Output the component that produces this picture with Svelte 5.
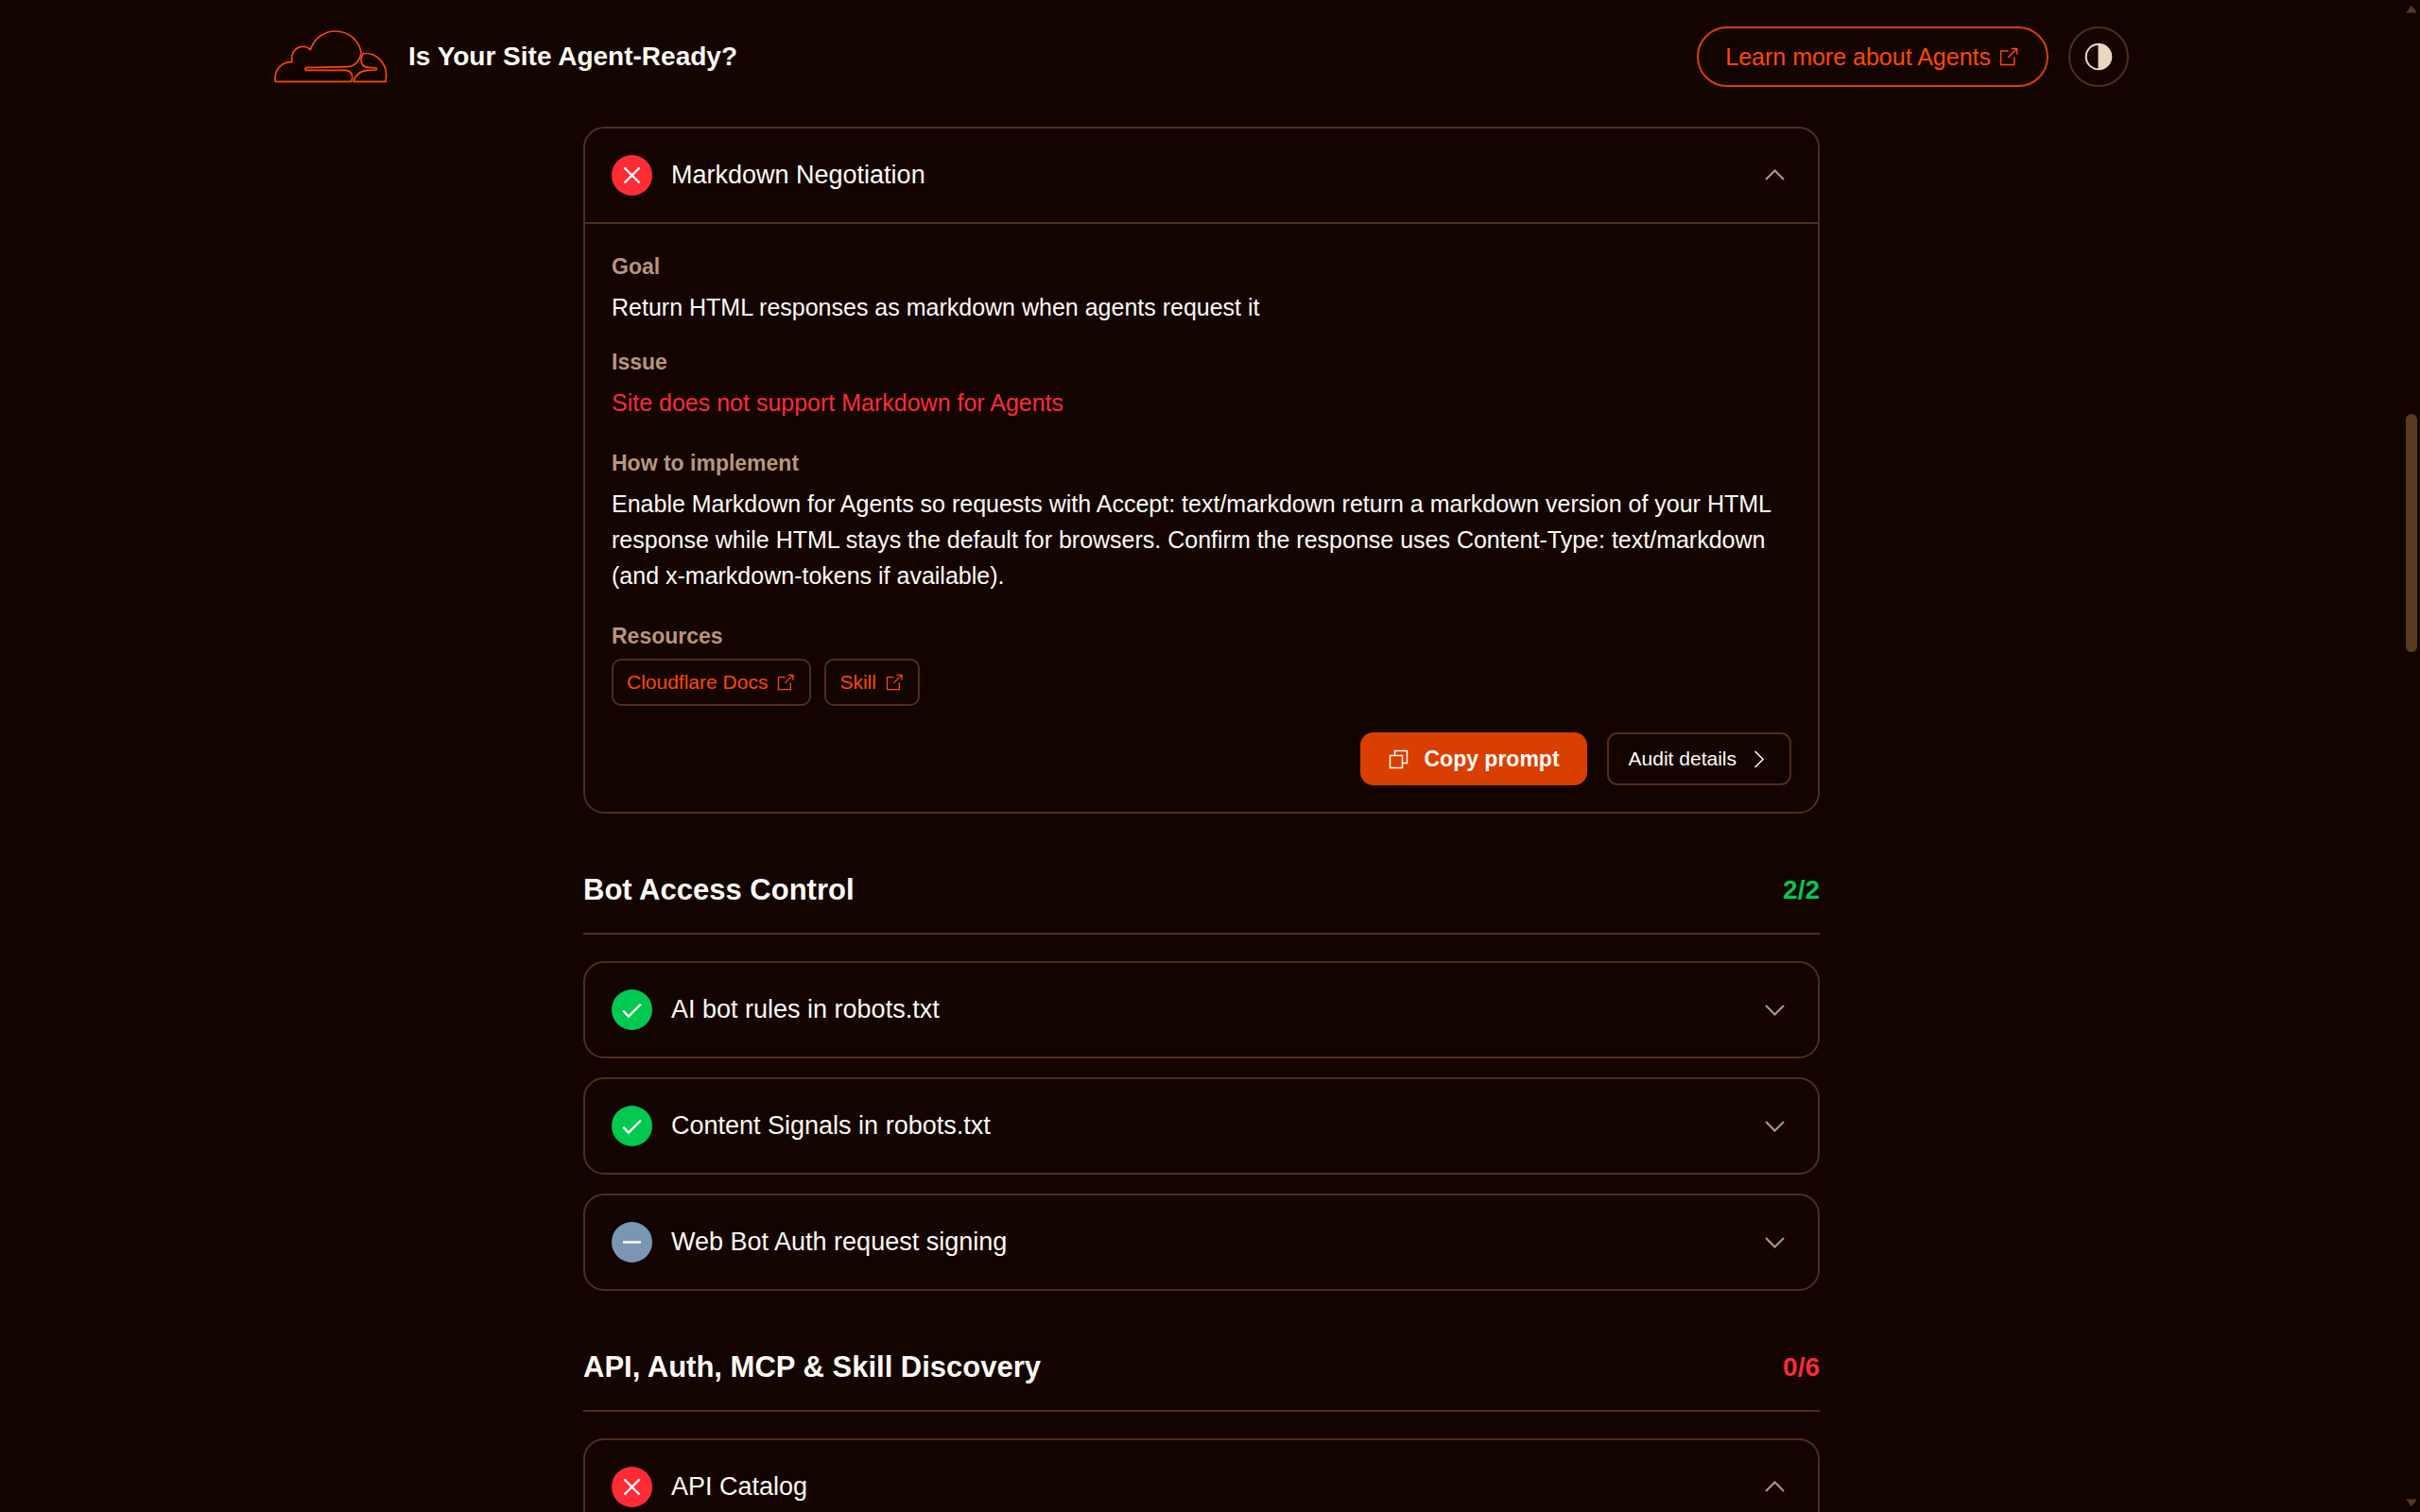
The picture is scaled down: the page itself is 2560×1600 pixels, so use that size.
<script lang="ts">
	type Status = 'pass' | 'fail' | 'neutral';

	interface Check {
		title: string;
		status: Status;
		open?: boolean;
		goal?: string;
		issue?: string;
		fix?: string;
		resources?: string[];
	}

	interface Section {
		title?: string;
		score?: string;
		passed?: boolean;
		checks: Check[];
	}

	let sections: Section[] = $state([
		{
			checks: [
				{
					title: 'Markdown Negotiation',
					status: 'fail',
					open: true,
					goal: 'Return HTML responses as markdown when agents request it',
					issue: 'Site does not support Markdown for Agents',
					fix: 'Enable Markdown for Agents so requests with Accept: text/markdown return a markdown version of your HTML response while HTML stays the default for browsers. Confirm the response uses Content-Type: text/markdown (and x-markdown-tokens if available).',
					resources: ['Cloudflare Docs', 'Skill']
				}
			]
		},
		{
			title: 'Bot Access Control',
			score: '2/2',
			passed: true,
			checks: [
				{ title: 'AI bot rules in robots.txt', status: 'pass' },
				{ title: 'Content Signals in robots.txt', status: 'pass' },
				{ title: 'Web Bot Auth request signing', status: 'neutral' }
			]
		},
		{
			title: 'API, Auth, MCP & Skill Discovery',
			score: '0/6',
			passed: false,
			checks: [{ title: 'API Catalog', status: 'fail', open: true }]
		}
	]);

	const badgePaths: Record<Status, string> = {
		pass: 'M12 22.5 18 28.5 31 15.5',
		fail: 'M13.5 13.5 29.5 29.5M29.5 13.5 13.5 29.5',
		neutral: 'M12 21.5H31'
	};
</script>

{#snippet external()}
	<svg class="external" viewBox="-1 -2 23 23" aria-hidden="true">
		<path d="M9 3.3H.7V18.3H15.5V10M12.3.7H18.5V7M18.5.7 8.5 10.5" />
	</svg>
{/snippet}

<div class="window">
	<div class="page">
		<header>
			<a class="brand" href="#top">
				<svg viewBox="17 20 360 172" aria-hidden="true">
					<path
						d="M21 186C16 150 38 124 74 123C69 100 80 81 101 76C113 73 125 77 132 85C145 46 177 26 211 26C253 26 287 55 293 94C290 118 274 138 250 139L118 142Q113 146 118 150L245 150C263 152 269 168 262 186Z"
					/>
					<path
						d="M300 97C340 92 372 125 373 165L371 186H269C275 165 290 151 315 150L340 149Q344 146 340 143L316 141C292 139 287 118 300 97Z"
					/>
				</svg>
				<span>Is Your Site Agent-Ready?</span>
			</a>
			<div class="header-actions">
				<a class="learn" href="#agents">Learn more about Agents {@render external()}</a>
				<button class="theme" type="button" aria-label="Toggle theme">
					<svg viewBox="0 0 30 30" aria-hidden="true">
						<circle cx="15" cy="15" r="13.3" />
						<path d="M14.5 1.5A13.5 13.5 0 0 1 14.5 28.5Z" />
					</svg>
				</button>
			</div>
		</header>

		<main>
			{#each sections as section}
				<section>
					{#if section.title}
						<div class="section-head">
							<h2>{section.title}</h2>
							<span class="score" class:passed={section.passed}>{section.score}</span>
						</div>
					{/if}
					<div class="checks">
						{#each section.checks as check}
							<article class="card">
								<button
									class="card-head"
									type="button"
									aria-expanded={check.open ?? false}
									onclick={() => (check.open = !check.open)}
								>
									<svg class="badge {check.status}" viewBox="0 0 43 43" aria-hidden="true">
										<circle cx="21.5" cy="21.5" r="21.5" />
										<path d={badgePaths[check.status]} />
									</svg>
									<span class="card-title">{check.title}</span>
									<svg class="chevron" viewBox="0 0 35 35" aria-hidden="true">
										<path d={check.open ? 'M8 22 17.5 12.5 27 22' : 'M8 13 17.5 22.5 27 13'} />
									</svg>
								</button>

								{#if check.open}
									<div class="card-body">
										{#if check.goal}
											<div class="details">
												<div>
													<h3>Goal</h3>
													<p>{check.goal}</p>
												</div>
												<div>
													<h3>Issue</h3>
													<p class="issue">{check.issue}</p>
												</div>
											</div>
											<div>
												<h3>How to implement</h3>
												<p>{check.fix}</p>
											</div>
											<div>
												<h3>Resources</h3>
												<div class="resources">
													{#each check.resources ?? [] as resource}
														<a href="#docs">{resource} {@render external()}</a>
													{/each}
												</div>
											</div>
											<div class="actions">
												<button class="copy" type="button">
													<svg viewBox="0 0 23 23" aria-hidden="true">
														<path d="M2.5 7.5H15.5V20.5H2.5ZM7.5 7.5V2.5H20.5V15.5H15.5" />
													</svg>
													Copy prompt
												</button>
												<button class="audit" type="button">
													Audit details
													<svg viewBox="0 0 23 23" aria-hidden="true">
														<path d="M7.5 3 16 11.5 7.5 20" />
													</svg>
												</button>
											</div>
										{/if}
									</div>
								{/if}
							</article>
						{/each}
					</div>
				</section>
			{/each}
		</main>
	</div>

	<div class="scrollbar" aria-hidden="true">
		<svg viewBox="0 0 12 9"><path d="M6 1.5 11 8H1Z" /></svg>
		<div class="track">
			<div class="thumb"></div>
		</div>
		<svg viewBox="0 0 12 9"><path d="M6 7.5 11 1H1Z" /></svg>
	</div>
</div>

<style>
	:global(body) {
		background: #140400;
	}

	.window {
		--line: #502e18;
		--text: #fffbf5;
		--muted: #b8967a;
		--orange: #ff4801;
		display: flex;
		height: 100vh;
		overflow: hidden;
		color: var(--text);
		font-family: 'Liberation Sans', Arial, sans-serif;
		font-size: 25px;
		line-height: 38px;
	}

	.page {
		flex: 1;
		min-width: 0;
	}

	a {
		color: var(--orange);
		text-decoration: none;
	}

	button {
		font-family: inherit;
		color: inherit;
		background: none;
		cursor: pointer;
	}

	svg {
		flex: none;
		fill: none;
		stroke: currentColor;
		stroke-width: 2;
	}

	header {
		display: flex;
		align-items: center;
		justify-content: space-between;
		max-width: 1962px;
		margin: 0 auto;
		padding: 28px 0;
	}

	.brand {
		display: flex;
		align-items: center;
		gap: 22px;
	}

	.brand svg {
		width: 120px;
		stroke-width: 5;
		stroke-linejoin: round;
	}

	.brand span {
		color: var(--text);
		font-size: 28px;
		font-weight: 700;
	}

	.header-actions {
		display: flex;
		gap: 21px;
	}

	.learn {
		display: flex;
		align-items: center;
		gap: 9px;
		height: 60px;
		padding: 0 28px;
		border: 2px solid #dc3f02;
		border-radius: 32px;
	}

	.external {
		width: 22px;
		height: 22px;
		stroke-width: 1.5;
	}

	.theme {
		display: grid;
		place-items: center;
		width: 64px;
		height: 64px;
		padding: 0;
		border: 2px solid var(--line);
		border-radius: 50%;
		color: #ecd6c0;
	}

	.theme svg {
		width: 30px;
	}

	.theme path {
		fill: currentColor;
		stroke: none;
	}

	main {
		max-width: 1308px;
		margin: 14px auto 0;
	}

	.section-head {
		display: flex;
		align-items: center;
		justify-content: space-between;
		margin: 59px 0 28px;
		padding-bottom: 23px;
		border-bottom: 2px solid var(--line);
	}

	h2,
	h3,
	p {
		margin: 0;
	}

	h2 {
		font-size: 31px;
		line-height: 44px;
	}

	.score {
		color: #fb2c36;
		font-size: 28px;
		font-weight: 700;
	}

	.score.passed {
		color: #00c950;
	}

	.checks {
		display: flex;
		flex-direction: column;
		gap: 20px;
	}

	.card {
		border: 2px solid var(--line);
		border-radius: 22px;
	}

	.card-head {
		display: flex;
		align-items: center;
		gap: 20px;
		width: 100%;
		padding: 28px;
		border: 0;
		text-align: left;
	}

	.badge {
		width: 43px;
		height: 43px;
		color: #fff;
		stroke-width: 2.4;
	}

	.badge circle {
		stroke: none;
	}

	.badge.fail circle {
		fill: #ff2c36;
	}

	.badge.pass circle {
		fill: #00c950;
	}

	.badge.neutral circle {
		fill: #7b96b2;
	}

	.card-title {
		flex: 1;
		font-size: 27px;
	}

	.chevron {
		width: 35px;
		height: 35px;
		color: var(--muted);
	}

	.card-body {
		display: flex;
		flex-direction: column;
		gap: 28px;
		padding: 28px;
		border-top: 2px solid var(--line);
	}

	.details {
		display: flex;
		flex-direction: column;
		gap: 22px;
	}

	h3 {
		margin-bottom: 7px;
		color: var(--muted);
		font-size: 23px;
		line-height: 34px;
	}

	.issue {
		color: #fb2c36;
	}

	.resources {
		display: flex;
		gap: 14px;
	}

	.resources a {
		display: flex;
		align-items: center;
		gap: 10px;
		height: 46px;
		padding: 0 14px;
		border: 2px solid var(--line);
		border-radius: 10px;
		font-size: 21px;
	}

	.resources .external {
		width: 20px;
		height: 20px;
	}

	.actions {
		display: flex;
		justify-content: flex-end;
		gap: 21px;
	}

	.actions button {
		display: flex;
		align-items: center;
		height: 56px;
	}

	.actions svg {
		width: 23px;
		height: 23px;
		stroke-width: 1.5;
	}

	.copy {
		gap: 15px;
		padding: 0 29px;
		border: 0;
		border-radius: 14px;
		background: #d93f00;
		font-size: 23px;
		font-weight: 700;
	}

	.audit {
		gap: 12px;
		padding: 0 21px;
		border: 2px solid var(--line);
		border-radius: 11px;
		font-size: 21px;
	}

	.scrollbar {
		display: flex;
		flex-direction: column;
		align-items: center;
		width: 18px;
		padding: 5px 0;
		box-sizing: border-box;
		color: #5c3a1f;
	}

	.scrollbar svg {
		width: 12px;
		fill: currentColor;
		stroke-linejoin: round;
		stroke-width: 1;
	}

	.track {
		display: flex;
		flex-direction: column;
		flex: 1;
	}

	.track::before {
		content: '';
		height: 27%;
	}

	.thumb {
		width: 12px;
		height: 16%;
		border-radius: 6px;
		background: currentColor;
	}
</style>
